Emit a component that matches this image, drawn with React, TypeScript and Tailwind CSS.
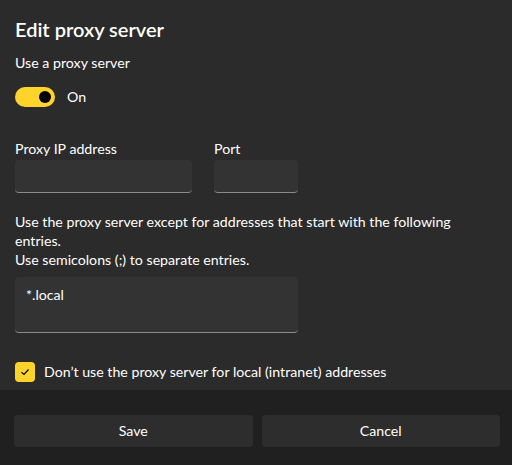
export default function App() {
  return (
    <div className="w-[512px] h-[465px] flex flex-col bg-[#2b2b2b] text-white" style={{ fontFamily: "Lato, 'Noto Sans', sans-serif" }}>
      <div className="flex-1 px-[15px] pt-[15px]">
        <div className="text-[20px] font-semibold leading-[28px]">Edit proxy server</div>
        <div className="mt-[10px] text-[14.2px] leading-[20px]">Use a proxy server</div>
        <div className="mt-[13px] flex items-center gap-[12px]">
          <div className="w-[40px] h-[20px] rounded-full bg-[#ffd42a] flex items-center justify-end pr-[4px]">
            <div className="w-[12px] h-[12px] rounded-full bg-black" />
          </div>
          <span className="text-[14.2px]">On</span>
        </div>
        <div className="mt-[32px] flex gap-[22px]">
          <div className="flex flex-col">
            <span className="text-[14.2px] leading-[20px]">Proxy IP address</span>
            <div className="mt-[1px] w-[177px] h-[33px] rounded-[4px] bg-[#333333] border-b border-[#8a8a8a]" />
          </div>
          <div className="flex flex-col">
            <span className="text-[14.2px] leading-[20px]">Port</span>
            <div className="mt-[1px] w-[84px] h-[33px] rounded-[4px] bg-[#333333] border-b border-[#8a8a8a]" />
          </div>
        </div>
        <div className="mt-[19px] text-[14.2px] leading-[19px]">
          Use the proxy server except for addresses that start with the following entries.<br />
          Use semicolons (;) to separate entries.
        </div>
        <div className="mt-[8px] w-[283px] h-[56px] rounded-[4px] bg-[#333333] border-b border-[#8a8a8a] px-[11px] pt-[7px] text-[14.2px]">*.local</div>
        <div className="mt-[28px] flex items-center gap-[9px]">
          <div className="w-[20px] h-[20px] rounded-[4px] bg-[#ffd42a] flex items-center justify-center">
            <svg width="12" height="12" viewBox="0 0 12 12"><path d="M2.5 6.2 L5 8.5 L9.5 3.5" fill="none" stroke="#000" strokeWidth="1.2" /></svg>
          </div>
          <span className="text-[14.2px]">Don’t use the proxy server for local (intranet) addresses</span>
        </div>
      </div>
      <div className="h-[75px] bg-[#202020] flex gap-[9px] pl-[14px] pr-[12px] pt-[25px]">
        <button className="flex-1 h-[32px] rounded-[4px] bg-[#2d2d2d] text-[14.2px]">Save</button>
        <button className="flex-1 h-[32px] rounded-[4px] bg-[#2d2d2d] text-[14.2px]">Cancel</button>
      </div>
    </div>
  );
}
